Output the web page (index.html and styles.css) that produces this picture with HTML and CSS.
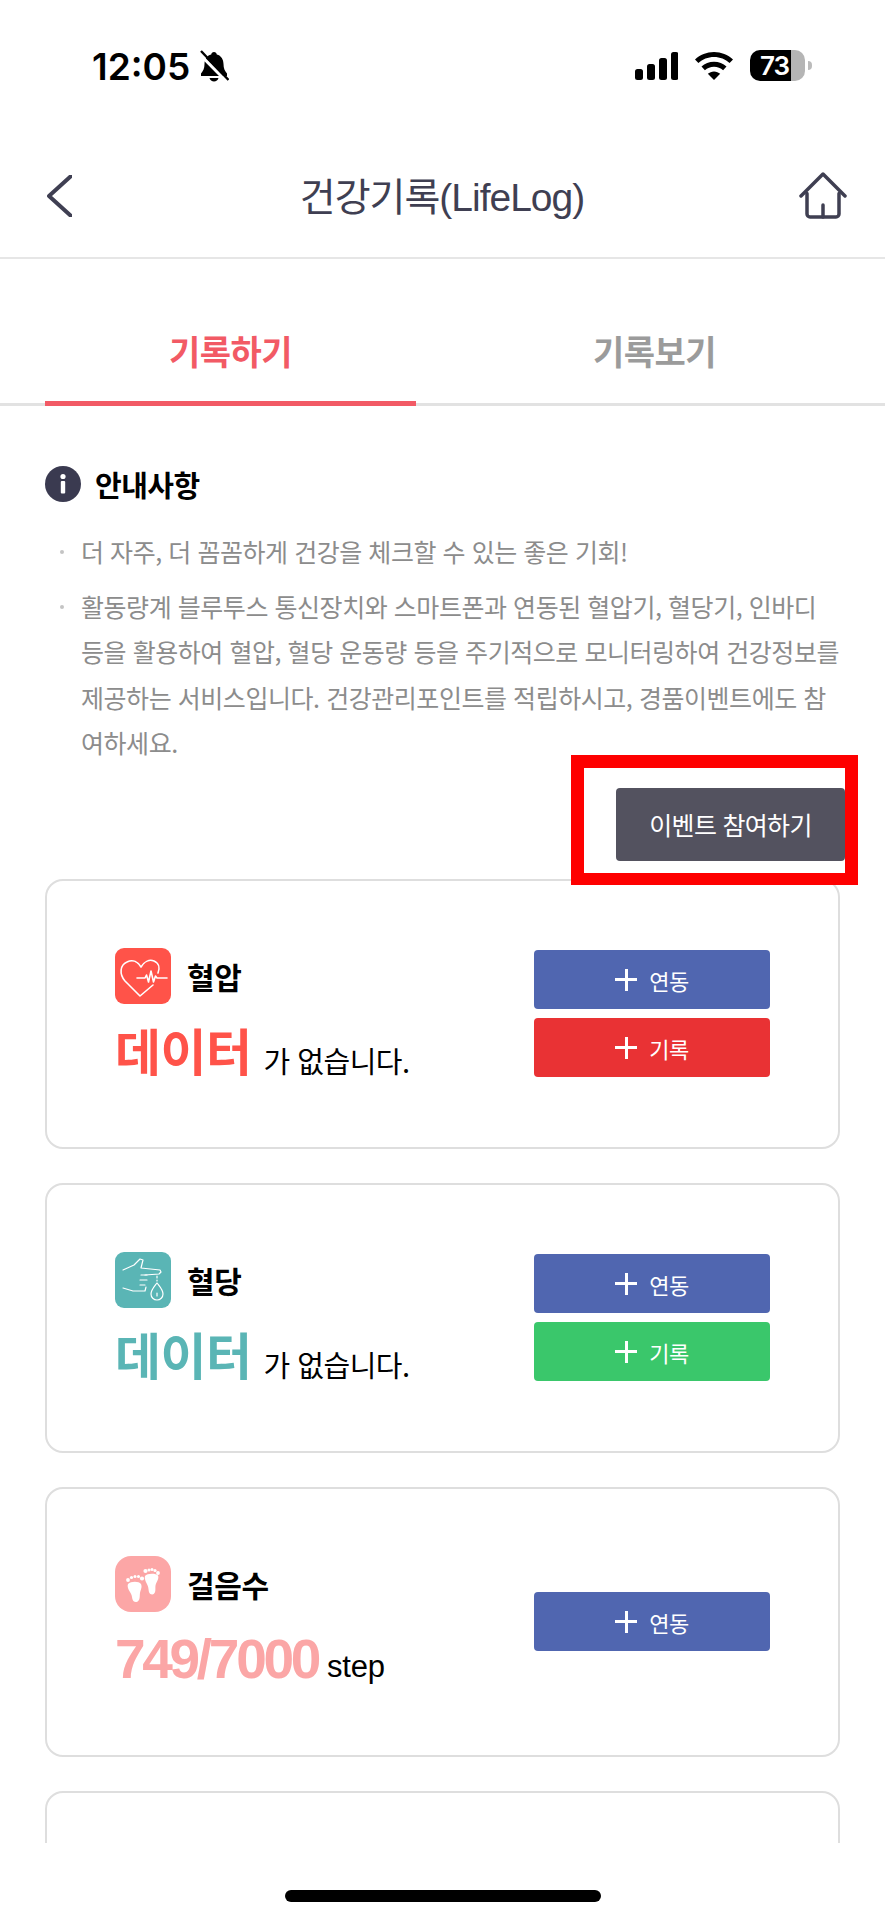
FILE: index.html
```html
<!DOCTYPE html>
<html lang="ko">
<head>
<meta charset="utf-8">
<title>건강기록(LifeLog)</title>
<link rel="stylesheet" href="styles.css">
</head>
<body>
<div class="screen">
  <div class="status">
    <div class="status-left">
      <span class="time">12:05</span>
      <svg class="bell" viewBox="0 0 30 32"><path d="M15 2c1.600 0 2.600 1 2.800 2.400C22.400 5.600 24.500 9.500 24.500 14c0 4.500 1.300 7 3.500 9.500V26H2v-2.500C4.200 21 5.500 18.500 5.500 14c0-4.500 2.100-8.400 6.700-9.600C12.400 3 13.400 2 15 2z"/><path d="M10.500 28h9c-.5 2.200-2.400 3.500-4.500 3.500s-4-1.300-4.500-3.500z"/><path class="bell-gap" d="M0 3.500 27 31"/><path class="bell-slash" d="M2 1 29.500 30"/></svg>
    </div>
    <div class="status-right">
      <svg class="signal" viewBox="0 0 43 28"><rect x="0" y="17" width="8" height="11" rx="2.500"/><rect x="12" y="12" width="8" height="16" rx="2.500"/><rect x="24" y="6" width="8" height="22" rx="2.500"/><rect x="36" y="0" width="7.500" height="28" rx="2.500"/></svg>
      <svg class="wifi" viewBox="0 0 38 28"><path d="M19 0c7.300 0 13.900 2.800 19 7.400l-3.400 3.700C30.500 7.300 25 5 19 5S7.500 7.300 3.400 11.100L0 7.400C5.100 2.800 11.700 0 19 0z"/><path d="M19 9.700c4.800 0 9.200 1.800 12.500 4.900l-3.400 3.600c-2.400-2.200-5.600-3.500-9.100-3.500s-6.700 1.300-9.100 3.500l-3.400-3.600c3.300-3.100 7.700-4.900 12.500-4.900z"/><path d="M19 19.400c2.400 0 4.600.9 6.200 2.400L19 28l-6.200-6.200c1.600-1.500 3.800-2.400 6.200-2.400z"/></svg>
      <div class="battery"><span class="battery-level">73</span><span class="battery-rest"></span></div>
      <span class="battery-nub"></span>
    </div>
  </div>

  <header class="topbar">
    <svg class="back" viewBox="0 0 25 42"><path d="M23.500 1.500 2 21l21.500 19.500"/></svg>
    <h1 class="title">건강기록(LifeLog)</h1>
    <svg class="home" viewBox="0 0 48 47"><path d="M8 21.500V42a3 3 0 0 0 3 3h26a3 3 0 0 0 3-3V21.500"/><path d="M2 24 24 2l22 22"/><path d="M24 33v12"/></svg>
  </header>

  <nav class="tabs">
    <div class="tab tab-active">기록하기</div>
    <div class="tab">기록보기</div>
  </nav>

  <main class="content">
    <section class="notice">
      <div class="notice-head">
        <svg class="info" viewBox="0 0 36 36"><circle cx="18" cy="18" r="18"/><circle class="info-mark" cx="18" cy="10.500" r="2.600"/><rect class="info-mark" x="15.800" y="15" width="4.400" height="12.500" rx="1"/></svg>
        <h2 class="notice-title">안내사항</h2>
      </div>
      <ul class="notice-list">
        <li>더 자주, 더 꼼꼼하게 건강을 체크할 수 있는 좋은 기회!</li>
        <li>활동량계 블루투스 통신장치와 스마트폰과 연동된 혈압기, 혈당기, 인바디 등을 활용하여 혈압, 혈당 운동량 등을 주기적으로 모니터링하여 건강정보를 제공하는 서비스입니다. 건강관리포인트를 적립하시고, 경품이벤트에도 참여하세요.</li>
      </ul>
      <div class="event-row">
        <div class="event-btn">이벤트 참여하기<span class="highlight"></span></div>
      </div>
    </section>

    <div class="cards">
      <article class="card">
        <div class="card-info">
          <div class="card-head">
            <svg class="metric-icon icon-bp" viewBox="0 0 56 56"><path d="M38 37 25 48 10 33C4 26 5 17 12 14c6-3 11 0 14 5 3-5 8-8 13-6 5 2 6 7 4 12"/><path d="M22 30h8l1.500-3 2 7 2.500-11 2.500 11 2-6 1.500 2h10"/></svg>
            <span class="metric-name">혈압</span>
          </div>
          <p class="metric-value"><strong class="big big-bp">데이터</strong><span class="unit">가 없습니다.</span></p>
        </div>
        <div class="card-actions">
          <div class="action action-link"><span class="plus"></span>연동</div>
          <div class="action action-red"><span class="plus"></span>기록</div>
        </div>
      </article>

      <article class="card">
        <div class="card-info">
          <div class="card-head">
            <svg class="metric-icon icon-bg" viewBox="0 0 56 56"><path d="M8 18 19 13l6-6 3 1-2 8 19 2 1 2-2 2-14 1"/><path d="M26 23h6M25 28h7M25 33h5"/><path d="M8 36l10 3h12l1-4"/><path d="M42 31c3 4 6 7 6 11a6 6 0 0 1-12 0c0-4 3-7 6-11z"/><path d="M42 41v3"/><path d="M42 24v2M42 28v1"/></svg>
            <span class="metric-name">혈당</span>
          </div>
          <p class="metric-value"><strong class="big big-bg">데이터</strong><span class="unit">가 없습니다.</span></p>
        </div>
        <div class="card-actions">
          <div class="action action-link"><span class="plus"></span>연동</div>
          <div class="action action-green"><span class="plus"></span>기록</div>
        </div>
      </article>

      <article class="card">
        <div class="card-info">
          <div class="card-head">
            <svg class="metric-icon icon-step" viewBox="0 0 56 56"><path d="M13 28c3-3 11-3 13 0 1.500 3-.5 6-1 9-.5 3 .5 8-3.500 9-4.500.5-4-4-5-7-1-3-5-7-3.500-11z"/><path d="M30 20c2-3 11-3 13-.5 1.500 3-2 7-2.500 10-.5 3 1 8-3 9-4.500 0-3.500-5-4.500-8-1-3-4-7-3-10.500z"/><circle cx="13" cy="24" r="1.900"/><circle cx="16.500" cy="21.500" r="1.600"/><circle cx="20" cy="20.500" r="1.500"/><circle cx="23.500" cy="20.500" r="1.500"/><circle cx="27" cy="22.500" r="2.100"/><circle cx="30.500" cy="15" r="2.100"/><circle cx="34" cy="14" r="1.500"/><circle cx="37" cy="13.500" r="1.500"/><circle cx="40" cy="14.500" r="1.600"/><circle cx="43" cy="17" r="1.900"/></svg>
            <span class="metric-name">걸음수</span>
          </div>
          <p class="metric-value metric-steps"><strong class="big big-step">749/7000</strong><span class="unit unit-latin">step</span></p>
        </div>
        <div class="card-actions">
          <div class="action action-link"><span class="plus"></span>연동</div>
        </div>
      </article>

      <article class="card"></article>
    </div>
  </main>

  <div class="home-area"><span class="home-bar"></span></div>
</div>
</body>
</html>
```
FILE: styles.css
```css
* { box-sizing: border-box; }
html, body { margin: 0; padding: 0; background: #fff; }
.screen {
  width: 885px;
  height: 1920px;
  display: flex;
  flex-direction: column;
  overflow: hidden;
  background: #fff;
  font-family: "Noto Sans CJK KR", "Noto Sans", sans-serif;
  color: #000;
}

/* status bar */
.status {
  height: 110px;
  flex: none;
  display: flex;
  justify-content: space-between;
  padding: 49px 73px 0 92px;
}
.status-left { display: flex; align-items: flex-start; gap: 9px; }
.time {
  font-family: Inter, "Liberation Sans", sans-serif;
  font-weight: 600;
  font-size: 37px;
  line-height: 36px;
}
.bell { width: 30px; height: 32px; margin-top: 1px; }
.bell-gap { stroke: #fff; stroke-width: 3; fill: none; }
.bell-slash { stroke: #000; stroke-width: 2.400; fill: none; }
.status-right { display: flex; align-items: flex-start; }
.signal { width: 43px; height: 28px; margin-top: 3px; }
.wifi { width: 38px; height: 28px; margin: 3px 0 0 17px; }
.battery {
  width: 55px;
  height: 31px;
  margin: 1px 0 0 17px;
  display: flex;
  border-radius: 10px;
  overflow: hidden;
}
.battery-level {
  flex: none;
  width: 41px;
  background: #000;
  color: #fff;
  font-family: Inter, "Liberation Sans", sans-serif;
  font-weight: 600;
  font-size: 26px;
  line-height: 31px;
  padding-left: 10px;
  letter-spacing: -1px;
  white-space: nowrap;
}
.battery-rest { flex: 1; background: #b5b5b5; }
.battery-nub {
  width: 4px;
  height: 9px;
  margin: 12px 0 0 3px;
  background: #bbb;
  border-radius: 0 4px 4px 0;
}

/* top bar */
.topbar {
  height: 149px;
  flex: none;
  display: flex;
  align-items: flex-start;
  justify-content: space-between;
  padding: 62px 38px 0 47px;
  border-bottom: 2px solid #e6e6e6;
}
.back { width: 25px; height: 42px; margin-top: 3px; fill: none; stroke: #3f3f52; stroke-width: 4; stroke-linecap: round; stroke-linejoin: round; }
.title {
  margin: 0 0 0 13px;
  font-family: "Liberation Sans", "Noto Sans CJK KR", sans-serif;
  font-weight: 400;
  font-size: 39px;
  line-height: 52px;
  color: #3f3f52;
  letter-spacing: -1px;
}
.home { width: 48px; height: 47px; fill: none; stroke: #3f3f52; stroke-width: 3.500; stroke-linecap: round; stroke-linejoin: round; }

/* tabs */
.tabs {
  height: 147px;
  flex: none;
  display: flex;
  padding: 0 45px;
  border-bottom: 3px solid #e2e2e2;
}
.tab {
  position: relative;
  flex: none;
  width: 371px;
  padding-top: 69px;
  text-align: center;
  font-weight: 700;
  font-size: 34px;
  line-height: 46px;
  color: #9b9b9b;
  letter-spacing: -0.500px;
}
.tab + .tab { width: 477px; }
.tab-active { color: #f25a65; }
.tab-active::after {
  content: "";
  position: absolute;
  left: 0;
  right: 0;
  bottom: -3px;
  height: 5px;
  background: #f25a65;
}

/* content */
.content {
  height: 1437px;
  flex: none;
  overflow: hidden;
  padding: 0 45px;
}
.notice { padding-top: 60px; }
.notice-head { display: flex; align-items: center; gap: 14px; height: 36px; }
.info { width: 36px; height: 36px; fill: #3a3a50; }
.info-mark { fill: #fff; }
.notice-title { margin: 0; font-weight: 700; font-size: 29px; line-height: 36px; letter-spacing: -0.500px; }
.notice-list {
  list-style: none;
  margin: 27px 0 0;
  padding: 0 0 0 36px;
  font-size: 25px;
  line-height: 45.500px;
  color: #8c8c8c;
  letter-spacing: -0.450px;
}
.notice-list li { position: relative; margin-bottom: 9px; }
.notice-list li::before {
  content: "";
  position: absolute;
  left: -21px;
  top: 21px;
  width: 4px;
  height: 4px;
  border-radius: 50%;
  background: #c4c4c4;
}
.event-row { display: flex; justify-content: flex-end; margin-right: -5px; margin-top: 22px; }
.event-btn {
  position: relative;
  width: 229px;
  height: 73px;
  display: flex;
  align-items: center;
  justify-content: center;
  background: #53525f;
  border-radius: 4px;
  color: #fff;
  font-size: 25px;
  letter-spacing: -0.700px;
}
.highlight {
  position: absolute;
  left: -45px;
  right: -13px;
  top: -33px;
  bottom: -24px;
  border: 13px solid #fe0000;
  border-bottom-width: 12px;
}

/* cards */
.cards { display: flex; flex-direction: column; gap: 34px; margin-top: 18px; }
.card {
  flex: none;
  height: 270px;
  border: 2.500px solid #dedede;
  border-radius: 18px;
  display: flex;
  align-items: center;
  justify-content: space-between;
  padding: 0 68px;
}
.card-info { display: flex; flex-direction: column; }
.card-head { display: flex; align-items: center; gap: 16px; }
.metric-icon { width: 56px; height: 56px; border-radius: 9px; fill: none; stroke: #fff; stroke-linecap: round; stroke-linejoin: round; }
.icon-bp { background: #ff5349; stroke-width: 1.600; }
.icon-bg { background: #5ab5b5; stroke-width: 1.200; }
.icon-step { background: #fca6a6; border-radius: 16px; fill: #fff; stroke: none; }
.metric-name { font-weight: 700; font-size: 30px; line-height: 40px; letter-spacing: -0.300px; }
.metric-value { margin: 14px 0 0; display: flex; align-items: flex-end; gap: 12px; height: 62px; }
.metric-steps { gap: 9px; }
.big { font-weight: 700; font-size: 50px; line-height: 62px; letter-spacing: -0.500px; }
.big-bp { color: #ff5349; }
.big-bg { color: #5ab5b5; }
.big-step {
  font-family: "Liberation Sans", sans-serif;
  font-size: 55px;
  line-height: 58px;
  letter-spacing: -3.300px;
  color: #fba6a6;
}
.unit { font-size: 29px; line-height: 40px; letter-spacing: -0.500px; }
.unit-latin { font-family: "Liberation Sans", sans-serif; font-size: 31px; line-height: 42px; letter-spacing: -0.200px; }
.card-actions { display: flex; flex-direction: column; gap: 9px; width: 236px; }
.action {
  height: 59px;
  display: flex;
  align-items: center;
  justify-content: center;
  gap: 12px;
  border-radius: 4px;
  color: #fff;
  font-size: 22px;
  letter-spacing: -0.500px;
}
.action-link { background: #5066b0; }
.action-red { background: #e93234; }
.action-green { background: #3ac76b; }
.plus {
  width: 22px;
  height: 22px;
  background:
    linear-gradient(#fff, #fff) center / 22px 3px no-repeat,
    linear-gradient(#fff, #fff) center / 3px 22px no-repeat;
}

/* home indicator */
.home-area { flex: 1; display: flex; justify-content: center; padding-top: 47px; }
.home-bar { width: 316px; height: 12px; border-radius: 6px; background: #000; }
```
